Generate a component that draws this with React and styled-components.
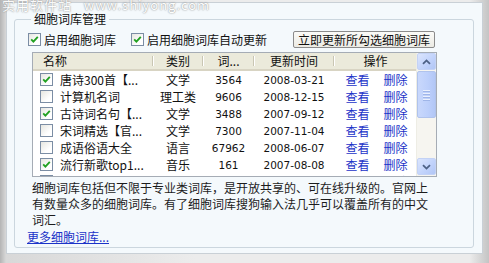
import React from 'react';
import styled, { createGlobalStyle } from 'styled-components';

const GlobalStyle = createGlobalStyle`
  html, body {
    margin: 0;
    padding: 0;
    background: #e2e2e2;
  }
  body {
    font-family: "Noto Sans CJK SC", "DejaVu Sans", sans-serif;
    font-size: 12px;
    color: #111;
  }
`;

const Screen = styled.div`
  position: relative;
  box-sizing: border-box;
  width: 489px;
  height: 263px;
  display: flex;
  padding: 2px 6px 9px 6px;
  background: linear-gradient(to right, #b4b4b4 0px, #d8d8d8 6px, #ececec 40%, #ececec 96%, #c4c4c4 100%);
`;

const Watermark = styled.div`
  position: absolute;
  top: -3px;
  left: 2px;
  font-size: 13px;
  line-height: 16px;
  letter-spacing: 1px;
  color: #ffffff;
  text-shadow: 0 0 2px #8a8a8a, 0 0 1px #9a9a9a;
  opacity: 0.85;
  white-space: nowrap;
`;

const Window = styled.div`
  flex: 1;
  box-sizing: border-box;
  background: #f4f9fc;
  border: 1px solid #c9d0d6;
  padding: 9px 8px 0 7px;
`;

const GroupBox = styled.fieldset`
  margin: 0;
  box-sizing: border-box;
  height: 236px;
  border: 1px solid #cbd6de;
  border-radius: 3px;
  padding: 5px 0 0 12px;
`;

const Legend = styled.legend`
  padding: 0 3px;
  margin-left: 4px;
  font-size: 12px;
  line-height: 14px;
  color: #111;
`;

const OptionRow = styled.div`
  display: flex;
  align-items: center;
  height: 17px;
  margin-left: 1px;
`;

const CheckLabel = styled.label`
  display: flex;
  align-items: center;
  gap: 3px;
  margin-right: ${p => p.$gap || 0}px;
  line-height: 16px;
  white-space: nowrap;
`;

const Box = styled.span`
  box-sizing: border-box;
  width: 13px;
  height: 13px;
  flex: none;
  display: inline-flex;
  align-items: center;
  justify-content: center;
  background: linear-gradient(135deg, #e6e6e0 0%, #ffffff 70%);
  border: 1px solid #7b8da4;
`;

const Button = styled.button`
  box-sizing: border-box;
  height: 17px;
  padding: 0 4px;
  font: inherit;
  font-size: 12px;
  line-height: 14px;
  color: #111;
  background: linear-gradient(#fbfbf8, #ecebe4);
  border: 1px solid #8b8b8b;
  border-radius: 2px;
  white-space: nowrap;
`;

const ListView = styled.div`
  display: flex;
  box-sizing: border-box;
  width: 405px;
  height: 125px;
  margin: 4px 0 0 5px;
  border: 1px solid #a5acb5;
  background: #ffffff;
  overflow: hidden;
`;

const ListBody = styled.div`
  flex: 1;
  overflow: hidden;
`;

const cols = '120px 50px 51px 80px 83px';

const Header = styled.div`
  display: grid;
  grid-template-columns: ${cols};
  height: 18px;
  box-sizing: border-box;
  background: #ebeadb;
  border-bottom: 2px solid #d8d4c3;
`;

const HeadCell = styled.div`
  position: relative;
  display: flex;
  align-items: center;
  justify-content: ${p => (p.$left ? 'flex-start' : 'center')};
  padding-left: ${p => (p.$left ? 10 : 0)}px;
  line-height: 16px;
  &::after {
    content: '';
    position: absolute;
    right: 0;
    top: 3px;
    bottom: 3px;
    width: 1px;
    background: #c9c6b3;
    box-shadow: 1px 0 0 #ffffff;
    display: ${p => (p.$last ? 'none' : 'block')};
  }
`;

const Row = styled.div`
  display: grid;
  grid-template-columns: ${cols};
  height: 17px;
  align-items: center;
  white-space: nowrap;
`;

const NameCell = styled.div`
  display: flex;
  align-items: center;
  gap: 7px;
  padding-left: 7px;
  overflow: hidden;
`;

const Cell = styled.div`
  text-align: center;
  font-family: ${p => (p.$num ? '"DejaVu Sans", sans-serif' : 'inherit')};
  font-size: ${p => (p.$num ? '10.5px' : '12px')};
  line-height: 16px;
`;

const Ops = styled.div`
  display: flex;
  justify-content: center;
  gap: 14px;
  padding-left: 2px;
`;

const OpLink = styled.span`
  color: #1b33c8;
`;

const ScrollBar = styled.div`
  width: 19px;
  flex: none;
  display: flex;
  flex-direction: column;
  background: #f6f5f0;
  border-left: 1px solid #eeede5;
`;

const ScrollBtn = styled.div`
  box-sizing: border-box;
  height: 17px;
  margin: ${p => (p.$down ? 'auto 0 1px 0' : '0')};
  display: flex;
  align-items: center;
  justify-content: center;
  background: linear-gradient(135deg, #dbe5fd 0%, #c0d2fb 60%, #b1c6f5 100%);
  border: 1px solid #c3d2f5;
  border-radius: 2px;
`;

const Thumb = styled.div`
  box-sizing: border-box;
  height: 47px;
  margin-top: 1px;
  display: flex;
  flex-direction: column;
  align-items: center;
  justify-content: center;
  gap: 2px;
  background: linear-gradient(to right, #c9d8fc, #bccffb 60%, #b2c7f6);
  border: 1px solid #b0c3ec;
  border-radius: 2px;
  & > i {
    display: block;
    width: 7px;
    height: 1px;
    background: #e9effd;
    box-shadow: 0 1px 0 #9fb5e8;
  }
`;

const Description = styled.p`
  margin: 3px 0 0 5px;
  width: 400px;
  line-height: 16px;
  font-size: 12px;
  color: #1c1c1c;
`;

const MoreLink = styled.a`
  display: inline-block;
  line-height: 14px;
  color: #1b33c8;
  text-decoration: underline;
  font-size: 12px;
`;

const Check = ({ checked }) => (
  <Box>
    {checked && (
      <svg width="9" height="9" viewBox="0 0 9 9">
        <path d="M1.2 4.3 L3.4 6.6 L7.8 1.8" fill="none" stroke="#21a121" strokeWidth="1.8" />
      </svg>
    )}
  </Box>
);

const Arrow = ({ down }) => (
  <svg width="9" height="6" viewBox="0 0 9 6">
    <path
      d={down ? 'M1 1.2 L4.5 4.6 L8 1.2' : 'M1 4.8 L4.5 1.4 L8 4.8'}
      fill="none"
      stroke="#4d6185"
      strokeWidth="1.8"
    />
  </svg>
);

const rows = [
  { on: true, name: '唐诗300首【...', type: '文学', count: '3564', date: '2008-03-21' },
  { on: false, name: '计算机名词', type: '理工类', count: '9606', date: '2008-12-15' },
  { on: true, name: '古诗词名句【...', type: '文学', count: '3488', date: '2007-09-12' },
  { on: false, name: '宋词精选【官...', type: '文学', count: '7300', date: '2007-11-04' },
  { on: false, name: '成语俗语大全', type: '语言', count: '67962', date: '2008-06-07' },
  { on: true, name: '流行新歌top1...', type: '音乐', count: '161', date: '2007-08-08' },
  { on: false, name: '经典歇后语【...', type: '语言', count: '2186', date: '2008-01-05' },
];

export default function App() {
  return (
    <Screen>
      <GlobalStyle />
      <Window>
        <GroupBox>
          <Legend>细胞词库管理</Legend>
          <OptionRow>
            <CheckLabel $gap={15}>
              <Check checked />
              启用细胞词库
            </CheckLabel>
            <CheckLabel $gap={26}>
              <Check checked />
              启用细胞词库自动更新
            </CheckLabel>
            <Button>立即更新所勾选细胞词库</Button>
          </OptionRow>

          <ListView>
            <ListBody>
              <Header>
                <HeadCell $left>名称</HeadCell>
                <HeadCell>类别</HeadCell>
                <HeadCell>词...</HeadCell>
                <HeadCell>更新时间</HeadCell>
                <HeadCell $last>操作</HeadCell>
              </Header>
              {rows.map((r, i) => (
                <Row key={i}>
                  <NameCell>
                    <Check checked={r.on} />
                    {r.name}
                  </NameCell>
                  <Cell>{r.type}</Cell>
                  <Cell $num>{r.count}</Cell>
                  <Cell $num>{r.date}</Cell>
                  <Ops>
                    <OpLink>查看</OpLink>
                    <OpLink>删除</OpLink>
                  </Ops>
                </Row>
              ))}
            </ListBody>
            <ScrollBar>
              <ScrollBtn>
                <Arrow />
              </ScrollBtn>
              <Thumb>
                <i />
                <i />
                <i />
                <i />
              </Thumb>
              <ScrollBtn $down>
                <Arrow down />
              </ScrollBtn>
            </ScrollBar>
          </ListView>

          <Description>
            细胞词库包括但不限于专业类词库，是开放共享的、可在线升级的。官网上有数量众多的细胞词库。有了细胞词库搜狗输入法几乎可以覆盖所有的中文词汇。
          </Description>
          <MoreLink href="#">更多细胞词库...</MoreLink>
        </GroupBox>
      </Window>
      <Watermark>实用软件站 &nbsp; www.shiyong.com</Watermark>
    </Screen>
  );
}
